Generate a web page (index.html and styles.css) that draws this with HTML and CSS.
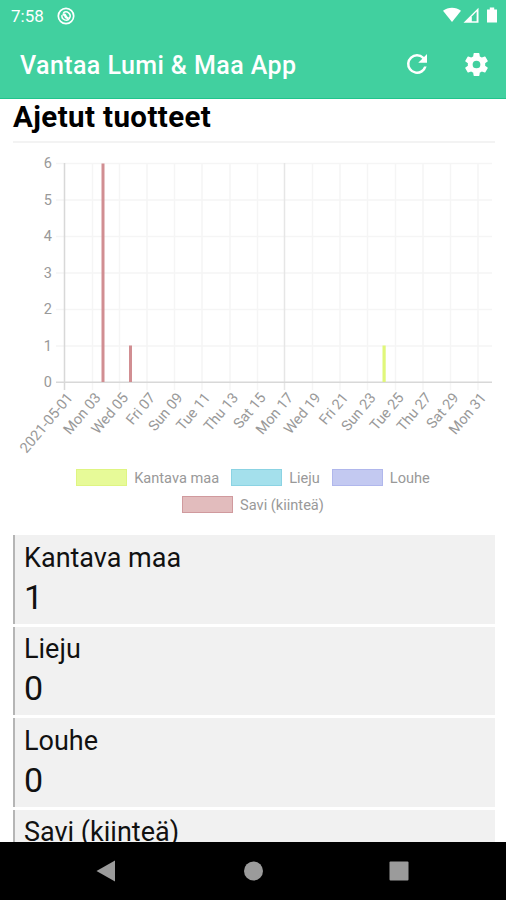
FILE: index.html
```html
<!DOCTYPE html>
<html lang="fi">
<head>
    <meta charset="UTF-8">
    <meta name="viewport" content="width=device-width, initial-scale=1.0">
    <title>Vantaa Lumi &amp; Maa App</title>
    <link rel="stylesheet" href="styles.css">
</head>
<body>
    <header class="header">
        <div class="status-bar">
            <span class="time">7:58</span>
            <svg class="status-app" width="18" height="18" viewBox="0 0 18 18">
                <circle cx="9" cy="9" r="7.7" fill="none" stroke="#fff" stroke-width="1.7"/>
                <path d="M5 8.2a4.1 4.1 0 1 0 6.6-2.4A4.1 4.1 0 0 0 6.3 5.9" fill="none" stroke="#fff" stroke-width="1.5"/>
                <path d="M5.6 6.5c2.2-.6 3.3.3 3.9 1.7.5 1.2 1.3 1.9 2.7 2.2l-1.3 1.9c-2.3-.4-3.2-1.4-3.6-2.7-.3-.9-.8-1.3-1.9-1.4z" fill="#fff"/>
            </svg>
            <svg class="status-icons" width="56" height="18" viewBox="0 0 56 18">
                <path d="M0 3.7C5-.4 13-.4 18 3.7L9 15z" fill="#fff"/>
                <path d="M20.5 15.8H35.5V.8z" fill="#fff"/>
                <path d="M28.8 9.5V14.2H33.6V4.6z" fill="#41d09f"/>
                <path d="M44 2.5h2.8V.4h4.4v2.1H54v13H44z" fill="#fff"/>
            </svg>
        </div>
        <div class="toolbar">
            <h1>Vantaa Lumi &amp; Maa App</h1>
            <button type="button" class="icon-button" aria-label="Päivitä">
                <svg width="30" height="30" viewBox="0 0 24 24">
                    <path d="M17.65 6.35A7.96 7.96 0 0 0 12 4a8 8 0 1 0 7.73 10h-2.08A6 6 0 1 1 12 6c1.66 0 3.14.69 4.22 1.78L13 11h7V4z" fill="#fff"/>
                </svg>
            </button>
            <button type="button" class="icon-button" aria-label="Asetukset">
                <svg width="29" height="29" viewBox="0 0 24 24">
                    <path d="M19.14 12.94c.04-.3.06-.61.06-.94 0-.32-.02-.64-.07-.94l2.03-1.58a.49.49 0 0 0 .12-.61l-1.92-3.32a.49.49 0 0 0-.59-.22l-2.39.96a7 7 0 0 0-1.62-.94l-.36-2.54A.48.48 0 0 0 13.92 2.4h-3.84a.48.48 0 0 0-.47.41l-.36 2.54c-.59.24-1.13.57-1.62.94l-2.39-.96a.48.48 0 0 0-.59.22L2.74 8.87a.48.48 0 0 0 .12.61l2.03 1.58a6.2 6.2 0 0 0-.02 1.88l-2.03 1.58a.49.49 0 0 0-.12.61l1.92 3.32c.12.22.37.29.59.22l2.39-.96c.5.38 1.03.7 1.62.94l.36 2.54c.05.24.24.41.48.41h3.84c.24 0 .44-.17.47-.41l.36-2.54c.59-.24 1.13-.56 1.62-.94l2.39.96c.22.08.47 0 .59-.22l1.92-3.32a.48.48 0 0 0-.12-.61zM12 15.2a3.2 3.2 0 1 1 0-6.4 3.2 3.2 0 0 1 0 6.4z" fill="#fff"/>
                </svg>
            </button>
        </div>
    </header>

    <main class="content">
        <h2>Ajetut tuotteet</h2>

        <svg class="chart" width="506" height="316" viewBox="0 143 506 316">
            <!-- Grid -->
            <path class="grid" d="M56 163.5H492M56 200H492M56 236.5H492M56 273H492M56 309.5H492M56 346H492"/>
            <path class="grid" d="M92.5 163V390M119.5 163V390M147 163V390M174.5 163V390M202 163V390M230 163V390M257.5 163V390M312.5 163V390M340 163V390M367.5 163V390M395.5 163V390M423 163V390M450.5 163V390M478 163V390"/>
            <path class="grid-dark" d="M284.5 163V390"/>
            <path class="axis" d="M64.5 163V390M56 382.2H492"/>

            <!-- Bars -->
            <rect class="bar-savi" x="101.5" y="163.5" width="3" height="218.5"/>
            <rect class="bar-savi" x="129" y="345.5" width="3" height="36.5"/>
            <rect class="bar-kantava" x="382.5" y="345.5" width="3.2" height="36.5"/>

            <g class="ticks-y">
                <text x="52" y="168">6</text>
                <text x="52" y="204.5">5</text>
                <text x="52" y="241">4</text>
                <text x="52" y="277.5">3</text>
                <text x="52" y="314">2</text>
                <text x="52" y="350.5">1</text>
                <text x="52" y="387">0</text>
            </g>
            <g class="ticks-x">
                <text transform="translate(73.5 398) rotate(-50)">2021-05-01</text>
                <text transform="translate(101.5 398) rotate(-50)">Mon 03</text>
                <text transform="translate(129 398) rotate(-50)">Wed 05</text>
                <text transform="translate(156 398) rotate(-50)">Fri 07</text>
                <text transform="translate(183.5 398) rotate(-50)">Sun 09</text>
                <text transform="translate(211 398) rotate(-50)">Tue 11</text>
                <text transform="translate(239 398) rotate(-50)">Thu 13</text>
                <text transform="translate(266.5 398) rotate(-50)">Sat 15</text>
                <text transform="translate(294 398) rotate(-50)">Mon 17</text>
                <text transform="translate(321.5 398) rotate(-50)">Wed 19</text>
                <text transform="translate(349 398) rotate(-50)">Fri 21</text>
                <text transform="translate(376.5 398) rotate(-50)">Sun 23</text>
                <text transform="translate(404.5 398) rotate(-50)">Tue 25</text>
                <text transform="translate(432 398) rotate(-50)">Thu 27</text>
                <text transform="translate(459.5 398) rotate(-50)">Sat 29</text>
                <text transform="translate(487 398) rotate(-50)">Mon 31</text>
            </g>
        </svg>

        <div class="legend">
            <div class="legend-row">
                <span class="legend-item"><i class="swatch kantava"></i>Kantava maa</span>
                <span class="legend-item"><i class="swatch lieju"></i>Lieju</span>
                <span class="legend-item"><i class="swatch louhe"></i>Louhe</span>
            </div>
            <div class="legend-row">
                <span class="legend-item"><i class="swatch savi"></i>Savi (kiinteä)</span>
            </div>
        </div>

        <div class="cards">
            <div class="card">
                <div class="card-title">Kantava maa</div>
                <div class="card-value">1</div>
            </div>
            <div class="card">
                <div class="card-title">Lieju</div>
                <div class="card-value">0</div>
            </div>
            <div class="card">
                <div class="card-title">Louhe</div>
                <div class="card-value">0</div>
            </div>
            <div class="card">
                <div class="card-title">Savi (kiinteä)</div>
            </div>
        </div>
    </main>

    <nav class="nav-bar">
        <svg width="506" height="58" viewBox="0 842 506 58">
            <path d="M96.5 871L115 860.5V881.5z"/>
            <circle cx="253.5" cy="871" r="9.5"/>
            <rect x="389.5" y="861.5" width="19" height="19" rx="1"/>
        </svg>
    </nav>
</body>
</html>
```
FILE: styles.css
```css
:root {
    --primary: #41d09f;
    --card: #f1f1f1;
}
body {
    font-family: Roboto, sans-serif;
    margin: 0;
    height: 900px;
    display: flex;
    flex-direction: column;
    overflow: hidden;
    background: white;
    color: #111;
}
.header {
    height: 99px;
    flex: none;
    box-sizing: border-box;
    background: var(--primary);
    border-bottom: 1px solid #20c48c;
    color: white;
}
.status-bar {
    height: 31px;
    display: flex;
    align-items: center;
    padding: 0 7px 0 11px;
}
.time {
    font-size: 17px;
    width: 46px;
}
.status-icons {
    margin-left: auto;
}
.toolbar {
    height: 66px;
    display: flex;
    align-items: center;
    padding: 0 15px 0 20px;
}
h1 {
    margin: 2px auto 0 0;
    font-size: 25px;
    font-weight: 500;
    letter-spacing: 0.42px;
    white-space: nowrap;
}
.icon-button {
    display: flex;
    padding: 0;
    margin-left: 30px;
    border: none;
    background: none;
}
.content {
    flex: 1;
    min-height: 0;
    overflow: hidden;
}
h2 {
    margin: 0 11px 0 13px;
    height: 42px;
    line-height: 37px;
    font-size: 29.5px;
    font-weight: 700;
    letter-spacing: 0.4px;
    color: #000;
    border-bottom: 2px solid #f3f3f3;
    white-space: nowrap;
}
.chart {
    display: block;
}
.grid, .grid-dark, .axis {
    fill: none;
    stroke: #f5f5f5;
    stroke-width: 1.5;
}
.grid-dark {
    stroke: #e6e6e6;
}
.axis {
    stroke: #d8d8d8;
}
.bar-savi {
    fill: #d18e92;
}
.bar-kantava {
    fill: #e0f77a;
}
.ticks-y, .ticks-x {
    font-size: 14.5px;
    fill: #999;
    text-anchor: end;
}
.legend {
    height: 76px;
    padding-top: 5px;
    box-sizing: border-box;
}
.legend-row {
    display: flex;
    justify-content: center;
    gap: 12px;
    height: 27px;
}
.legend-item {
    display: flex;
    align-items: center;
    gap: 7px;
    font-size: 14.6px;
    color: #999;
}
.swatch {
    width: 51px;
    height: 17px;
    box-sizing: border-box;
    border: 1px solid;
}
.kantava {
    background: #e7fa98;
    border-color: #dff582;
}
.lieju {
    background: #a4e0ec;
    border-color: #8bd3e3;
}
.louhe {
    background: #c3c9f1;
    border-color: #b0b7ec;
}
.savi {
    background: #e2bcbd;
    border-color: #d09a9e;
}
.cards {
    display: grid;
    gap: 3px;
    padding: 0 11px 0 13px;
}
.card {
    height: 88.5px;
    box-sizing: border-box;
    padding: 4.5px 0 0 9px;
    border-left: 2px solid #b5b5b5;
    background: var(--card);
}
.card-title {
    font-size: 27px;
    line-height: 36px;
}
.card-value {
    font-size: 34px;
    line-height: 42px;
}
.nav-bar {
    height: 58px;
    flex: none;
    background: #000;
}
.nav-bar svg {
    display: block;
    fill: #9b9b9b;
}
```
